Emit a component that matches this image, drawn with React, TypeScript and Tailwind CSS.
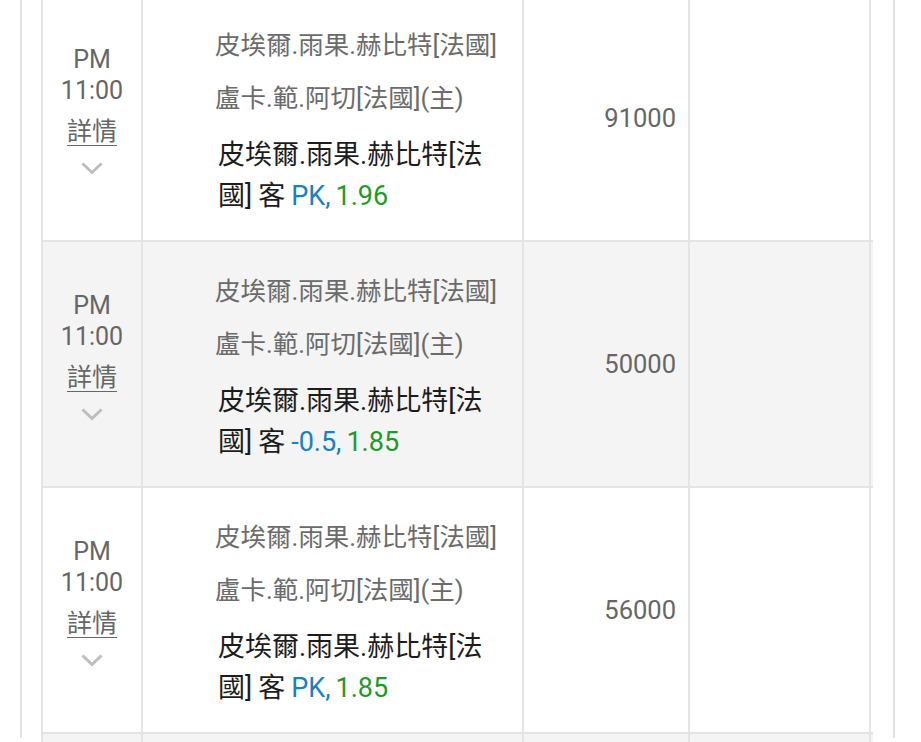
import React from 'react';

type Bet = {
  odds: string;
  price: string;
  amount: string;
};

const rows: Bet[] = [
  { odds: 'PK,', price: '1.96', amount: '91000' },
  { odds: '-0.5,', price: '1.85', amount: '50000' },
  { odds: 'PK,', price: '1.85', amount: '56000' },
  { odds: 'PK,', price: '1.85', amount: '30000' },
];

function Chevron() {
  return (
    <svg width="24" height="14" viewBox="0 0 24 14" className="mt-[14px]">
      <polyline points="2.5,2.5 12,11.5 21.5,2.5" fill="none" stroke="#bdbdbd" strokeWidth="3" />
    </svg>
  );
}

function BetRow({ bet, shaded }: { bet: Bet; shaded: boolean }) {
  return (
    <div
      className={
        'flex h-[246px] border-b-2 border-[#e4e4e4] ' + (shaded ? 'bg-[#f4f4f4]' : 'bg-white')
      }
    >
      {/* 時間 + 詳情 */}
      <div className="flex w-[100px] shrink-0 flex-col items-center border-l-2 border-[#e4e4e4] pt-[48px] text-[25px] leading-[31px] text-[#666]">
        <span>PM</span>
        <span>11:00</span>
        <span className="mt-[10px] underline decoration-1 underline-offset-[5px]">詳情</span>
        <Chevron />
      </div>

      {/* 賽事 */}
      <div className="flex w-[381px] shrink-0 flex-col justify-center border-l-2 border-[#e4e4e4] pl-[72px]">
        <p className="text-[25.5px] leading-[53px] text-[#6b6b6b]">皮埃爾.雨果.赫比特[法國]</p>
        <p className="text-[25.5px] leading-[53px] text-[#6b6b6b]">盧卡.範.阿切[法國](主)</p>
        <p className="mt-[10px] ml-[3px] w-[282px] text-[27px] leading-[41px] text-[#1c1c1c]">
          皮埃爾.雨果.赫比特[法國]<span className="ml-[6px]">客</span>
          <span className="ml-[6px] text-[#1a80c4]">{bet.odds}</span>
          <span className="ml-[5px] text-[#1f9a2a]">{bet.price}</span>
        </p>
      </div>

      {/* 金額 */}
      <div className="flex w-[166px] shrink-0 items-center justify-end border-l-2 border-[#e4e4e4] pr-[12px] text-[25.5px] text-[#666]">
        {bet.amount}
      </div>

      <div className="w-[183px] shrink-0 border-x-2 border-[#e4e4e4]" />
    </div>
  );
}

export default function App() {
  return (
    <div
      className="h-[742px] w-[921px] overflow-hidden bg-white"
      style={{ fontFamily: 'Roboto, "Noto Sans CJK TC", sans-serif' }}
    >
      <div className="ml-[20px] mr-[26px] h-full border-x-2 border-[#e2e2e2] pl-[19px] pr-[20px]">
        <div className="-mt-[4px]">
          {rows.map((bet, i) => (
            <BetRow key={i} bet={bet} shaded={i % 2 === 1} />
          ))}
        </div>
      </div>
    </div>
  );
}
